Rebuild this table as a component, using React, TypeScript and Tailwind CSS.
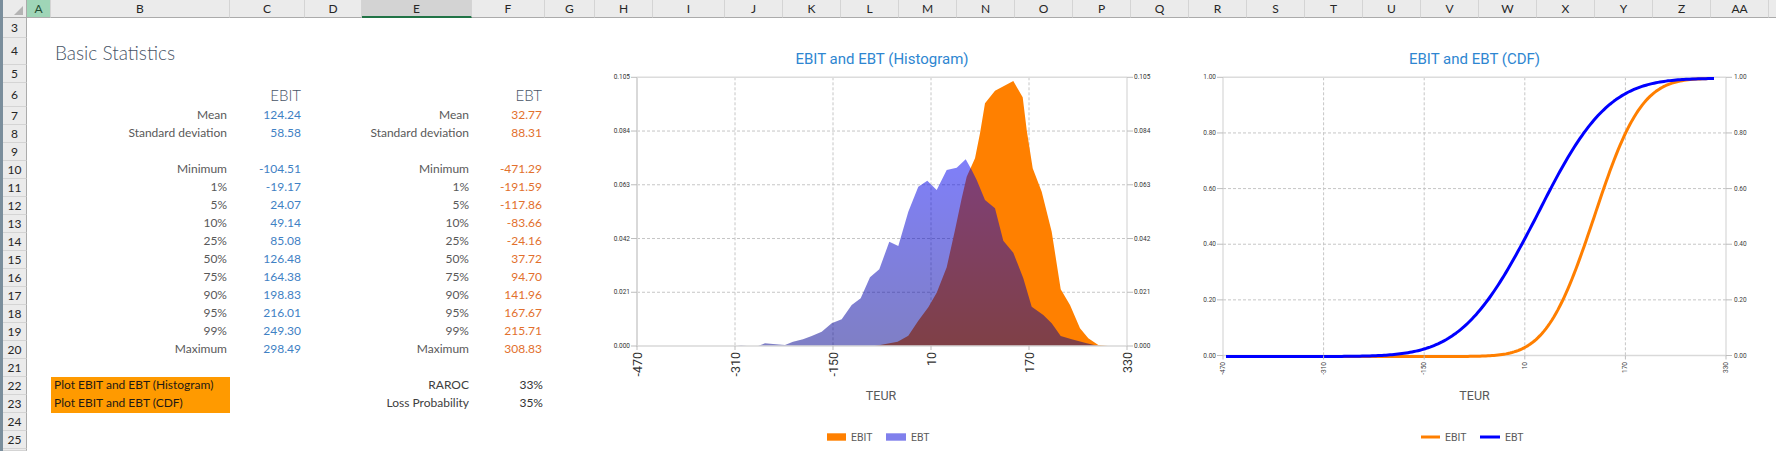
const CELL_FONT = "font-['Lato','Liberation_Sans',sans-serif]";
const CHART_FONT = "Roboto, 'Liberation Sans', sans-serif";

type Col = { l: string; w: string; kind?: 'sel' | 'act' };

const COLS: Col[] = [
  { l: 'A', w: 'w-[24px]', kind: 'sel' },
  { l: 'B', w: 'w-[179px]' },
  { l: 'C', w: 'w-[75px]' },
  { l: 'D', w: 'w-[57px]' },
  { l: 'E', w: 'w-[110px]', kind: 'act' },
  { l: 'F', w: 'w-[73px]' },
  { l: 'G', w: 'w-[50px]' },
  { l: 'H', w: 'w-[58px]' },
  { l: 'I', w: 'w-[72px]' },
  ...'JKLMNOPQRSTUVWXYZ'.split('').map((l) => ({ l, w: 'w-[58px]' })),
  { l: 'AA', w: 'w-[58px]' },
];

const ROWS: { n: number; h: string }[] = [
  { n: 3, h: 'h-[20px]' },
  { n: 4, h: 'h-[27px]' },
  { n: 5, h: 'h-[18px]' },
  { n: 6, h: 'h-[24px]' },
  ...Array.from({ length: 19 }, (_, i) => ({ n: i + 7, h: 'h-[18px]' })),
  { n: 26, h: 'h-[2px]' },
];

// rows 7..20: label, EBIT value, label, EBT value
const STATS: Record<number, [string, string, string, string]> = {
  7: ['Mean', '124.24', 'Mean', '32.77'],
  8: ['Standard deviation', '58.58', 'Standard deviation', '88.31'],
  10: ['Minimum', '-104.51', 'Minimum', '-471.29'],
  11: ['1%', '-19.17', '1%', '-191.59'],
  12: ['5%', '24.07', '5%', '-117.86'],
  13: ['10%', '49.14', '10%', '-83.66'],
  14: ['25%', '85.08', '25%', '-24.16'],
  15: ['50%', '126.48', '50%', '37.72'],
  16: ['75%', '164.38', '75%', '94.70'],
  17: ['90%', '198.83', '90%', '141.96'],
  18: ['95%', '216.01', '95%', '167.67'],
  19: ['99%', '249.30', '99%', '215.71'],
  20: ['Maximum', '298.49', 'Maximum', '308.83'],
};

function HeaderBar() {
  return (
    <div className="flex h-[18px] bg-[#ebebeb] text-[12px] text-[#262626]">
      <div className="w-[3px] shrink-0 bg-[#7a8e9c]" />
      <div className="relative w-[24px] shrink-0 border-r border-b border-[#ababab]">
        <svg className="absolute right-[3px] bottom-[2px]" width="9" height="9" viewBox="0 0 9 9">
          <polygon points="9,0 9,9 0,9" fill="#b4b4b4" />
        </svg>
      </div>
      {COLS.map((c) => (
        <div
          key={c.l}
          className={`flex shrink-0 items-center justify-center pt-[1px] border-r border-r-[#d4d4d4] ${c.w} ${
            c.kind === 'sel'
              ? 'bg-[#9fd5b7] border-b border-b-[#ababab] text-[#1f4d33]'
              : c.kind === 'act'
                ? 'bg-[#d3d3d3] border-b-2 border-b-[#217346]'
                : 'border-b border-b-[#ababab]'
          }`}
        >
          {c.l}
        </div>
      ))}
      <div className="flex-1 border-b border-[#ababab]" />
    </div>
  );
}

function Label({ w, children, dark }: { w: string; children?: React.ReactNode; dark?: boolean }) {
  return (
    <div
      className={`flex shrink-0 items-end justify-end pr-[3px] pb-[4px] text-[12px] leading-none whitespace-nowrap ${w} ${
        dark ? 'text-[#404040]' : 'text-[#595959]'
      }`}
    >
      {children}
    </div>
  );
}

function Cells({ n }: { n: number }) {
  const s = STATS[n];
  if (n === 4) {
    return (
      <div className="flex w-[568px] items-end pb-[3px] pl-[28px] text-[19px] leading-none font-light text-[#475466]">
        Basic Statistics
      </div>
    );
  }
  if (n === 6) {
    return (
      <div className="flex w-[568px] items-end pb-[4px] text-[15px] leading-none font-light text-[#475466]">
        <div className="w-[203px] shrink-0" />
        <div className="w-[75px] shrink-0 pr-[4px] text-right">EBIT</div>
        <div className="w-[167px] shrink-0" />
        <div className="w-[73px] shrink-0 pr-[3px] text-right">EBT</div>
      </div>
    );
  }
  if (s) {
    return (
      <div className="flex w-[568px]">
        <div className="w-[24px] shrink-0" />
        <Label w="w-[179px]">{s[0]}</Label>
        <div className="flex w-[75px] shrink-0 items-end justify-end pr-[4px] pb-[4px] text-[12px] leading-none text-[#3f81c4]">
          {s[1]}
        </div>
        <div className="w-[57px] shrink-0" />
        <Label w="w-[110px]">{s[2]}</Label>
        <div className="flex w-[73px] shrink-0 items-end justify-end pr-[3px] pb-[4px] text-[12px] leading-none text-[#e2702d]">
          {s[3]}
        </div>
      </div>
    );
  }
  if (n === 22 || n === 23) {
    return (
      <div className="flex w-[568px]">
        <div className="w-[24px] shrink-0" />
        <div className="flex w-[179px] shrink-0 items-end bg-[#ff9a00] pl-[3px] pb-[4px] text-[12px] leading-none text-[#1f1a14]">
          {n === 22 ? 'Plot EBIT and EBT (Histogram)' : 'Plot EBIT and EBT (CDF)'}
        </div>
        <div className="w-[132px] shrink-0" />
        <Label w="w-[110px]" dark>
          {n === 22 ? 'RAROC' : 'Loss Probability'}
        </Label>
        <div className="flex w-[73px] shrink-0 items-end justify-end pr-[2px] pb-[4px] text-[12px] leading-none text-[#333333]">
          {n === 22 ? '33%' : '35%'}
        </div>
      </div>
    );
  }
  return <div className="w-[568px]" />;
}

function SheetRows() {
  return (
    <div className="flex w-[595px] shrink-0 flex-col">
      {ROWS.map((r) => (
        <div key={r.n} className={`flex shrink-0 overflow-hidden ${r.h}`}>
          <div className="w-[3px] shrink-0 bg-[#7a8e9c]" />
          <div className="flex w-[24px] shrink-0 items-center justify-center border-r border-b border-r-[#ababab] border-b-[#d4d4d4] bg-[#ebebeb] text-[12px] text-[#262626]">
            {r.n < 26 ? r.n : ''}
          </div>
          <Cells n={r.n} />
        </div>
      ))}
    </div>
  );
}

// ---------- charts ----------

const HIST_EBIT: [number, number][] = [
  [279.7, 328], [302.6, 323.7], [313.3, 317.7], [323.3, 302.7], [333.3, 289.3], [341.7, 274.7],
  [351.7, 249.3], [360, 212], [366.7, 180.3], [371.7, 158.7], [380, 140.3], [385, 115.3],
  [390, 85.3], [400, 72.7], [418.3, 63], [427.7, 79.3], [431.7, 112], [437.7, 150.3],
  [446.7, 173.7], [456.7, 213.7], [465.7, 271.3], [475, 287], [485, 310.3], [493.3, 320.3],
  [503.3, 327], [513, 328],
];

const HIST_EBT: [number, number][] = [
  [142, 328], [146, 327.4], [152, 328], [163, 328], [170, 325.3], [178, 326], [190, 327],
  [198, 323.7], [208, 321.3], [216.7, 318], [226.7, 313.7], [236.7, 305.3], [246.7, 301.3],
  [256.7, 287], [265.7, 280.3], [275, 259.3], [284.3, 251.3], [294.3, 223.7], [303.3, 228],
  [313.3, 193.7], [323.3, 168.7], [332.3, 162.7], [341.7, 172], [351.7, 152], [361.7, 149.7],
  [370.7, 141.3], [376.7, 152], [381.7, 162], [390, 182], [400, 190.3], [408.3, 222.7],
  [418.3, 234.7], [428.3, 260.3], [436.7, 288.7], [448.3, 297], [456.7, 305.3], [465.7, 318],
  [476.7, 321.3], [491.7, 325.3], [503.3, 328],
];

const pts = (p: [number, number][]) => p.map(([x, y]) => `${x},${y}`).join(' ');

function Histogram() {
  const L = 42, R = 532, T = 59.3, B = 328;
  const yAt = (k: number) => B - (k * (B - T)) / 5;
  const xAt = (k: number) => L + (k * (R - L)) / 5;
  const yLabels = ['0.000', '0.021', '0.042', '0.063', '0.084', '0.105'];
  const xLabels = ['-470', '-310', '-150', '10', '170', '330'];
  return (
    <svg width="594" height="433" className="shrink-0" fontFamily={CHART_FONT}>
      <defs>
        <linearGradient id="ebtFill" gradientUnits="userSpaceOnUse" x1="0" y1="140" x2="0" y2="328">
          <stop offset="0" stopColor="#0000f4" />
          <stop offset="1" stopColor="#00008c" />
        </linearGradient>
      </defs>
      <text x="287" y="46" textAnchor="middle" fontSize="15" fill="#2e86d1">
        EBIT and EBT (Histogram)
      </text>
      {[1, 2, 3, 4].map((k) => (
        <line key={'h' + k} x1={L} x2={R} y1={yAt(k)} y2={yAt(k)} stroke="#c6c6c6" strokeDasharray="3 2" />
      ))}
      {[1, 2, 3, 4].map((k) => (
        <line key={'v' + k} x1={xAt(k)} x2={xAt(k)} y1={T} y2={B} stroke="#c6c6c6" strokeDasharray="3 2" />
      ))}
      <line x1={L} x2={R} y1={T} y2={T} stroke="#dcdcdc" strokeWidth="1.5" />
      <line x1={R} x2={R} y1={T} y2={B} stroke="#cfcfcf" />
      <polygon points={pts(HIST_EBIT)} fill="#ff8000" />
      <polygon points={pts(HIST_EBT)} fill="url(#ebtFill)" fillOpacity="0.5" />
      <line x1={L} x2={R} y1={B} y2={B} stroke="#d9d9d9" strokeWidth="1.5" />
      <line x1={L} x2={L} y1={T} y2={B + 1} stroke="#d9d9d9" strokeWidth="2" />
      {yLabels.map((t, k) => (
        <g key={t}>
          <line x1={36} x2={L} y1={yAt(k)} y2={yAt(k)} stroke="#bdbdbd" />
          <line x1={R} x2={R + 6} y1={yAt(k)} y2={yAt(k)} stroke="#bdbdbd" />
          <text x={35} y={yAt(k)} textAnchor="end" dominantBaseline="central" fontSize="6.5" fill="#333">
            {t}
          </text>
          <text x={R + 7} y={yAt(k)} dominantBaseline="central" fontSize="6.5" fill="#333">
            {t}
          </text>
        </g>
      ))}
      {xLabels.map((t, k) => (
        <g key={t}>
          <line x1={xAt(k)} x2={xAt(k)} y1={B} y2={B + 4} stroke="#bdbdbd" />
          <text
            x={xAt(k)}
            y={334}
            transform={`rotate(-90 ${xAt(k)} 334)`}
            textAnchor="end"
            dominantBaseline="central"
            fontSize="12.5"
            fill="#333"
          >
            {t}
          </text>
        </g>
      ))}
      <text x="286" y="377" textAnchor="middle" dominantBaseline="central" fontSize="12.5" fill="#595959">
        TEUR
      </text>
      <rect x="232" y="415.3" width="19" height="7.4" fill="#ff8000" />
      <text x="256" y="419" dominantBaseline="central" fontSize="10.5" fill="#595959">
        EBIT
      </text>
      <rect x="291" y="415.3" width="20" height="7.4" fill="#8080ec" />
      <text x="316" y="419" dominantBaseline="central" fontSize="10.5" fill="#595959">
        EBT
      </text>
    </svg>
  );
}

function phi(z: number) {
  const t = 1 / (1 + 0.2316419 * Math.abs(z));
  const d = 0.3989423 * Math.exp((-z * z) / 2);
  const p = d * t * (0.3193815 + t * (-0.3565638 + t * (1.781478 + t * (-1.821256 + t * 1.330274))));
  return z > 0 ? 1 - p : p;
}

function Cdf() {
  const L = 34, R = 537, T = 59.3, B = 337.5;
  const yAt = (k: number) => B - (k * (B - T)) / 5;
  const xAt = (k: number) => L + (k * (R - L)) / 5;
  const yLabels = ['0.00', '0.20', '0.40', '0.60', '0.80', '1.00'];
  const xLabels = ['-470', '-310', '-150', '10', '170', '330'];

  const curve = (m: number, lo: number, hi: number) => {
    const out: string[] = [];
    for (let x = 37; x <= 525; x += 2) {
      const v = phi((x - m) / (x < m ? lo : hi));
      out.push(`${x},${(B + 1 - v * (B - T)).toFixed(2)}`);
    }
    return out.join(' ');
  };

  return (
    <svg width="580" height="433" className="shrink-0" fontFamily={CHART_FONT}>
      <text x="285.5" y="46" textAnchor="middle" fontSize="15" fill="#2e86d1">
        EBIT and EBT (CDF)
      </text>
      {[1, 2, 3, 4].map((k) => (
        <line key={'h' + k} x1={L} x2={R} y1={yAt(k)} y2={yAt(k)} stroke="#c6c6c6" strokeDasharray="3 2" />
      ))}
      {[1, 2, 3, 4].map((k) => (
        <line key={'v' + k} x1={xAt(k)} x2={xAt(k)} y1={T} y2={B} stroke="#c6c6c6" strokeDasharray="3 2" />
      ))}
      <line x1={L} x2={R} y1={T} y2={T} stroke="#dcdcdc" strokeWidth="1.5" />
      <line x1={R} x2={R} y1={T} y2={B} stroke="#cfcfcf" />
      <line x1={L} x2={L} y1={T} y2={B} stroke="#cfcfcf" />
      <line x1={L} x2={R} y1={B} y2={B} stroke="#d9d9d9" strokeWidth="1.5" />
      <polyline points={curve(405, 37.5, 37)} fill="none" stroke="#ff7f00" strokeWidth="3" strokeLinejoin="round" />
      <polyline points={curve(347, 58, 56)} fill="none" stroke="#0000ff" strokeWidth="3" strokeLinejoin="round" />
      {yLabels.map((t, k) => (
        <g key={t}>
          <line x1={28} x2={L} y1={yAt(k)} y2={yAt(k)} stroke="#bdbdbd" />
          <line x1={R} x2={R + 6} y1={yAt(k)} y2={yAt(k)} stroke="#bdbdbd" />
          <text x={27} y={yAt(k)} textAnchor="end" dominantBaseline="central" fontSize="6.5" fill="#404040">
            {t}
          </text>
          <text x={R + 8} y={yAt(k)} dominantBaseline="central" fontSize="6.5" fill="#404040">
            {t}
          </text>
        </g>
      ))}
      {xLabels.map((t, k) => (
        <g key={t}>
          <line x1={xAt(k)} x2={xAt(k)} y1={B} y2={B + 4} stroke="#bdbdbd" />
          <text
            x={xAt(k)}
            y={344}
            transform={`rotate(-90 ${xAt(k)} 344)`}
            textAnchor="end"
            dominantBaseline="central"
            fontSize="6.5"
            fill="#404040"
          >
            {t}
          </text>
        </g>
      ))}
      <text x="285.5" y="377" textAnchor="middle" dominantBaseline="central" fontSize="12.5" fill="#595959">
        TEUR
      </text>
      <line x1="232" x2="251" y1="419" y2="419" stroke="#ff7f00" strokeWidth="3" />
      <text x="256" y="419" dominantBaseline="central" fontSize="10.5" fill="#595959">
        EBIT
      </text>
      <line x1="291" x2="311" y1="419" y2="419" stroke="#0000ff" strokeWidth="3" />
      <text x="316" y="419" dominantBaseline="central" fontSize="10.5" fill="#595959">
        EBT
      </text>
    </svg>
  );
}

export default function App() {
  return (
    <div className={`h-[451px] w-[1776px] overflow-hidden bg-white ${CELL_FONT}`}>
      <HeaderBar />
      <div className="flex">
        <SheetRows />
        <Histogram />
        <Cdf />
        <div className="flex-1" />
      </div>
    </div>
  );
}
